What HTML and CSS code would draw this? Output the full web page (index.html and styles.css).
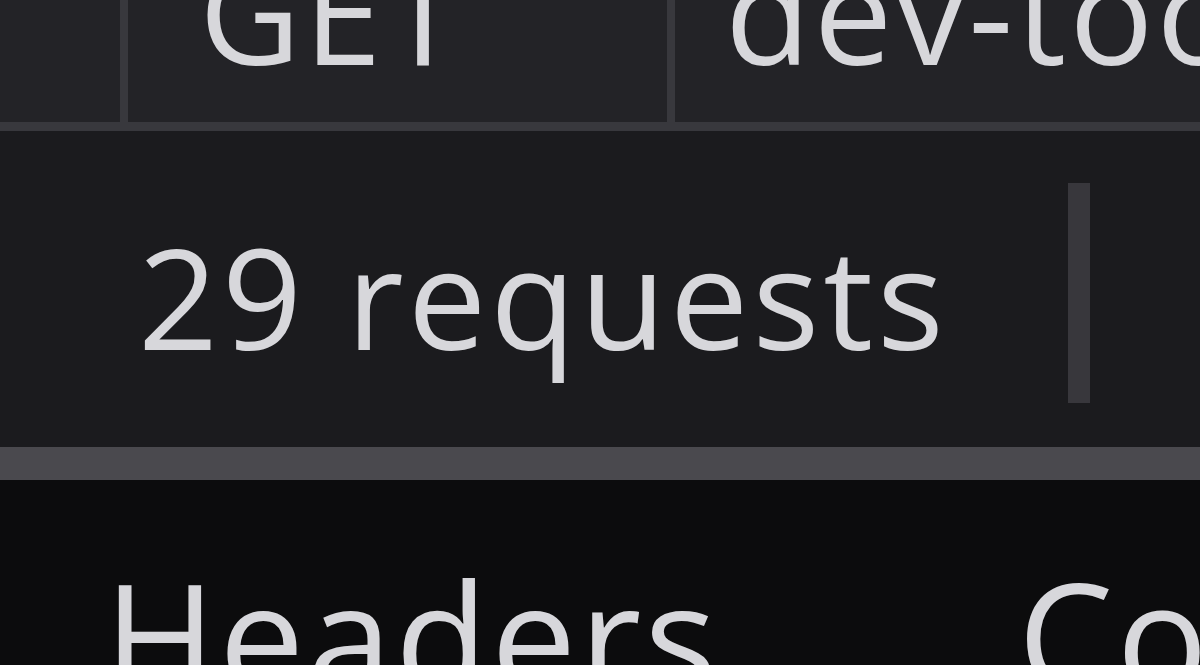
FILE: index.html
```html
<!DOCTYPE html>
<html lang="en">
<head>
<meta charset="utf-8">
<title>Network</title>
<link rel="stylesheet" href="styles.css">
</head>
<body>
  <div class="request-row">
    <div class="cell cell-status"></div>
    <div class="cell cell-method">GET</div>
    <div class="cell cell-domain">dev-tools.example</div>
  </div>
  <div class="status-bar">
    <span class="summary">29 requests</span>
    <span class="status-divider"></span>
  </div>
  <div class="splitter"></div>
  <div class="details">
    <span class="tab">Headers</span>
    <span class="tab tab-second">Cookies</span>
  </div>
</body>
</html>
```
FILE: styles.css
```css
html, body {
  margin: 0;
  padding: 0;
  width: 1200px;
  height: 665px;
  overflow: hidden;
  background: #0c0c0d;
  font-family: "Open Sans", "Noto Sans", sans-serif;
  color: #d7d7db;
}

.request-row {
  display: flex;
  height: 122px;
  background: #232327;
  border-bottom: 9px solid #38383d;
  font-size: 140px;
  line-height: 21px;
  letter-spacing: 3px;
  white-space: nowrap;
}

.cell {
  box-sizing: border-box;
  height: 122px;
}

.cell-status {
  width: 128px;
  border-right: 8px solid #38383d;
}

.cell-method {
  width: 547px;
  padding-left: 71px;
  border-right: 8px solid #38383d;
}

.cell-domain {
  flex: 1;
  padding-left: 50px;
  overflow: hidden;
}

.status-bar {
  display: flex;
  align-items: flex-start;
  height: 316px;
  box-sizing: border-box;
  padding: 95px 0 0 138px;
  background: #1b1b1e;
  font-size: 140px;
  line-height: 140px;
  letter-spacing: 4px;
  white-space: nowrap;
}

.status-divider {
  width: 22px;
  height: 220px;
  margin-left: 120px;
  margin-top: -43px;
  background: #38373c;
}

.splitter {
  height: 33px;
  background: #4a494e;
}

.details {
  display: flex;
  height: 185px;
  box-sizing: border-box;
  padding: 80px 0 0 104px;
  background: #0c0c0d;
  font-size: 152px;
  line-height: 152px;
  letter-spacing: 3px;
  white-space: nowrap;
  overflow: hidden;
}

.tab-second {
  margin-left: 298px;
}
```
